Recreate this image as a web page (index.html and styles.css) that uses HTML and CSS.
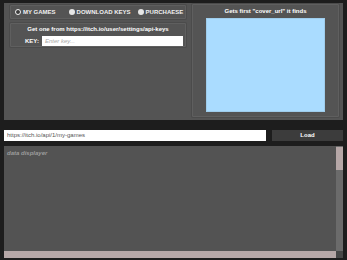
FILE: index.html
```html
<!DOCTYPE html>
<html lang="en">
<head>
  <meta charset="UTF-8">
  <meta name="viewport" content="width=device-width, initial-scale=1.0">
  <title>Itch API Viewer</title>
  <link rel="stylesheet" href="styles.css">
</head>
<body>
  <div class="panel">
    <div class="left-col">
      <div class="box radio-row">
        <label class="radio checked"><span class="dot"></span>MY GAMES</label>
        <label class="radio keys"><span class="dot"></span>DOWNLOAD KEYS</label>
        <label class="radio buys"><span class="dot"></span>PURCHAESE</label>
      </div>
      <div class="box key-box">
        <div class="box-title">Get one from https://itch.io/user/settings/api-keys</div>
        <div class="key-row">
          <span class="key-label">KEY:</span>
          <div class="key-input">Enter key...</div>
        </div>
      </div>
    </div>
    <div class="box cover-box">
      <div class="box-title">Gets first "cover_url" it finds</div>
      <div class="cover"></div>
    </div>
  </div>

  <div class="url-row">
    <div class="url-input">https://itch.io/api/1/my-games</div>
    <div class="load-btn">Load</div>
  </div>

  <div class="data">
    <div class="data-text">data displayer</div>
    <div class="vbar"><div class="vthumb"></div></div>
    <div class="hbar"></div>
    <div class="corner"></div>
  </div>
</body>
</html>
```

FILE: styles.css
```css
* {
  margin: 0;
  padding: 0;
  box-sizing: border-box;
}

body {
  font-family: "Liberation Sans", Arial, sans-serif;
  font-size: 6px;
  font-weight: bold;
  background-color: #1d1d1d;
  color: white;
  width: 347px;
  height: 260px;
  overflow: hidden;
  padding-top: 3px;
}

.panel {
  margin: 0 4px;
  height: 117px;
  display: flex;
  gap: 6px;
  padding: 1px 4px 3px 6px;
  background-color: #545454;
}

.left-col {
  width: 176px;
  margin-top: 1px;
  display: flex;
  flex-direction: column;
  gap: 4px;
}

.box {
  border: 1px solid #5f5f5f;
  box-shadow: 0 0 0 1px #4b4b4b;
  border-radius: 1px;
}

.radio-row {
  height: 14px;
  display: flex;
  align-items: center;
  padding-left: 4px;
  white-space: nowrap;
}

.radio {
  display: flex;
  align-items: center;
  gap: 2px;
  line-height: 1;
  color: #f0f0f0;
}

.radio.keys {
  margin-left: 13px;
}

.radio.buys {
  margin-left: 7px;
}

.dot {
  width: 6px;
  height: 6px;
  border-radius: 50%;
  background-color: #e6e6e6;
}

.radio.checked .dot {
  background-color: #3a3a3a;
  border: 1.5px solid #f2f2f2;
}

.key-box {
  height: 24px;
  display: flex;
  flex-direction: column;
  align-items: center;
  padding-top: 2px;
}

.box-title {
  line-height: 7px;
  text-align: center;
}

.key-row {
  display: flex;
  align-items: center;
  margin-top: 3px;
  gap: 3px;
  padding-left: 14px;
  width: 100%;
}

.key-label {
  width: 14px;
}

.key-input {
  width: 141px;
  height: 10px;
  background-color: white;
  color: #a8a8a8;
  font-style: italic;
  font-weight: normal;
  line-height: 10px;
  padding-left: 3px;
}

.cover-box {
  flex: 1;
  display: flex;
  flex-direction: column;
  align-items: center;
  padding-top: 3px;
}

.cover {
  margin-top: 3px;
  width: 119px;
  height: 94px;
  background-color: #aadcff;
  border: 1px solid #9fcdec;
}

.url-row {
  display: flex;
  gap: 6px;
  margin: 10px 4px 0;
  height: 11px;
}

.url-input {
  width: 262px;
  background-color: white;
  color: #555;
  font-weight: normal;
  line-height: 11px;
  padding-left: 3px;
}

.load-btn {
  flex: 1;
  background-color: #3c3c3c;
  text-align: center;
  line-height: 11px;
}

.data {
  margin: 5px 4px 0;
  height: 112px;
  display: grid;
  grid-template-columns: 1fr 7px;
  grid-template-rows: 1fr 7px;
  background-color: #535353;
}

.data-text {
  color: #9c9c9c;
  font-style: italic;
  padding: 4px 0 0 3px;
}

.vbar {
  background-color: #6b6b6b;
  padding-top: 1px;
}

.vthumb {
  height: 23px;
  background-color: #b6a7a7;
}

.hbar {
  background-color: #b6a7a7;
}

.corner {
  background-color: #474747;
}
```
